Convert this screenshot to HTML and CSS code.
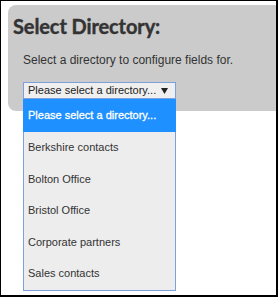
FILE: index.html
```html
<!DOCTYPE html>
<html>
<head>
<meta charset="utf-8">
<link rel="stylesheet" href="styles.css">
</head>
<body>
<div class="frame">
  <div class="panel">
    <h2 class="title">Select Directory:</h2>
    <p class="desc">Select a directory to configure fields for.</p>
    <div class="picker">
      <div class="select-box">
        <span class="select-text">Please select a directory...</span>
        <svg class="arrow" width="7" height="6" viewBox="0 0 7 6"><polygon points="0,0 7,0 3.5,6" fill="#222"/></svg>
      </div>
      <ul class="options">
        <li class="option selected">Please select a directory...</li>
        <li class="option">Berkshire contacts</li>
        <li class="option">Bolton Office</li>
        <li class="option">Bristol Office</li>
        <li class="option">Corporate partners</li>
        <li class="option">Sales contacts</li>
      </ul>
    </div>
  </div>
</div>
</body>
</html>
```
FILE: styles.css
```css
html, body {
  margin: 0;
  padding: 0;
  background: #fff;
}
.frame {
  width: 278px;
  height: 297px;
  box-sizing: border-box;
  border: 1px solid #000;
  border-right-width: 2px;
  border-bottom-width: 2px;
  padding: 4px 0 0 7px;
  background: #fff;
  overflow: hidden;
}
.panel {
  background: #cbcbcb;
  border-radius: 8px 0 0 8px;
  padding: 9px 0 12px 5px;
}
.title {
  margin: 0;
  font-family: Lato, "Liberation Sans", sans-serif;
  font-weight: 700;
  font-size: 20px;
  line-height: 24px;
  letter-spacing: -0.1px;
  color: #333;
  -webkit-text-stroke: 0.4px #333;
}
.desc {
  margin: 15px 0 0 10px;
  font-family: "Liberation Sans", Arial, sans-serif;
  font-size: 12px;
  line-height: 14px;
  color: #333;
}
.picker {
  position: relative;
  margin: 15px 0 0 10px;
  width: 153px;
}
.select-box {
  box-sizing: border-box;
  height: 17px;
  border: 1px solid #7d9fdc;
  background: #efefef;
  display: flex;
  align-items: center;
  padding: 0 7px 0 4px;
  font-family: "Liberation Sans", Arial, sans-serif;
  font-size: 11px;
  line-height: 15px;
  color: #222;
}
.select-text {
  flex: 1;
  white-space: nowrap;
}
.arrow {
  display: block;
  margin-top: 1px;
}
.options {
  position: absolute;
  top: 100%;
  left: 0;
  width: 100%;
  box-sizing: border-box;
  margin: 0;
  padding: 0;
  list-style: none;
  background: #ededed;
  border: 1px solid #7d9fdc;
  border-top: none;
}
.option {
  height: 31.6px;
  line-height: 31.6px;
  padding-left: 4px;
  font-family: "Liberation Sans", Arial, sans-serif;
  font-size: 11px;
  color: #333;
  white-space: nowrap;
}
.option.selected {
  height: 33px;
  line-height: 33px;
  margin: 0 -1px;
  padding-left: 5px;
  background: #1e90ff;
  color: #fff;
  -webkit-text-stroke: 0.3px #fff;
}
```
